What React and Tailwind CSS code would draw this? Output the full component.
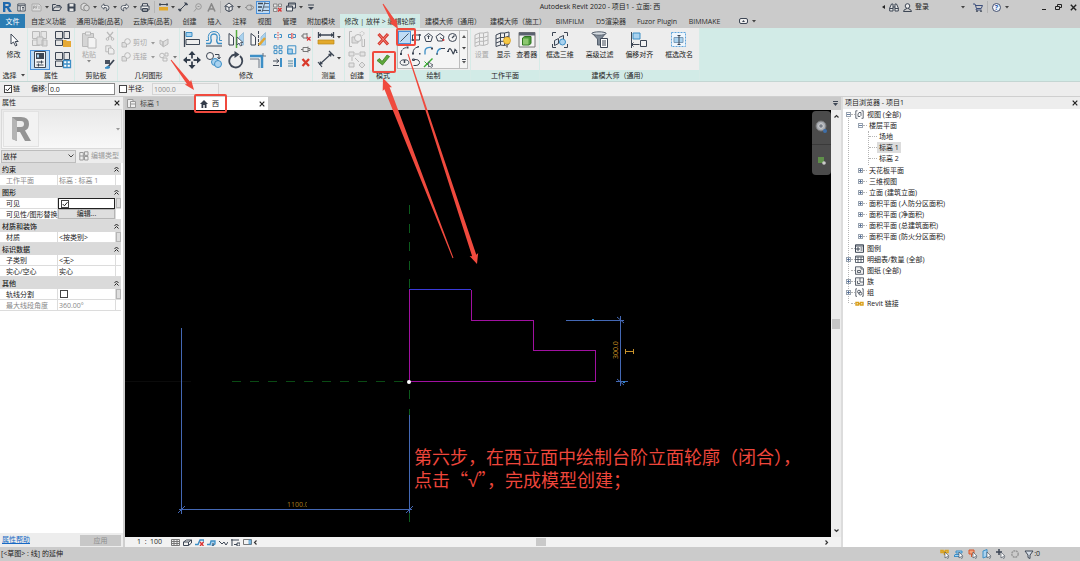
import React from "react";

const DARK = "#3d4654";
const BLUE = "#3d8fc6";
const LIGHT = "#a9d2ef";
const OFF = "#b9b9b9";

function Svg({ w = 16, h, box, children, className = "" }) {
  const height = h || w;
  return (
    <svg width={w} height={height} viewBox={box || `0 0 ${w} ${height}`} fill="none" stroke={DARK} strokeWidth="1" className={`block shrink-0 ${className}`} aria-hidden="true">
      {children}
    </svg>
  );
}

const Caret = ({ color = "#444" }) => (
  <Svg w={4} h={3}><path d="M0 0h4l-2 2.5z" fill={color} stroke="none" /></Svg>
);

const CloseX = ({ w = 6 }) => (
  <Svg w={w} box="0 0 6 6"><path d="M.7.7l4.6 4.6M5.3.7L.7 5.3" stroke="#222" strokeWidth="1.2" /></Svg>
);

/* Quick access toolbar */
const quickItems = [
  { label: "Revit", icon: <Svg w={10} box="0 0 10 10"><path d="M1 0h5q3 0 3 3 0 2-2 2.6L10 10H7L4.6 6H3.4v4H1z" fill="#1f68ad" stroke="none" /><path d="M3.4 2h2q1.4 0 1.4 1T5.4 4h-2z" fill="#cbcbcb" stroke="none" /></Svg> },
  { label: "主页", icon: <Svg w={9} box="0 0 9 9"><path d="M.8 1h7.4v7H.8zM1 2.7h7M3.2 3v5M5 4.500h2M5 6h2" fill="#eee" strokeWidth=".9" /></Svg> },
  { label: "族", wide: true, icon: <Svg w={11} h={9}><path d="M1 1h7l2 2v5H1z" fill="#dedede" stroke="#aaa" /><path d="M2.500 3v3M2.500 3h1.500v1.500H2.500M5 6V3h1.500M5 4.500h1M8 6V3" stroke="#999" strokeWidth=".7" /></Svg> },
  { caret: true },
  { label: "打开", icon: <Svg w={10} h={9}><path d="M.6 7.500V1.500h3l1 1h3.500v1.500M.6 7.500l2-3.500h7l-2 3.500z" fill="#d9d9d9" /></Svg> },
  { label: "保存", icon: <Svg w={9}><path d="M1 1h7v7H1z" fill="#3d4654" /><path d="M2.500 1h4v2.500h-4zM2.500 5.500h4V8h-4z" fill="#e8e8e8" stroke="none" /></Svg> },
  { label: "同步", icon: <Svg w={10}><path d="M1 3l3-2 3 1.500v4L4 8.500 1 7z" fill="#ddd" stroke="#8b8b8b" /><circle cx="6.500" cy="6" r="2.800" fill="#d5d5d5" stroke="#8b8b8b" /></Svg> },
  { caret: true },
  { label: "撤销", icon: <Svg w={10} h={9}><path d="M4 .8L1 3.500l3 2.700V4.500q3-.5 3 1.500 0 1-1 2 3-.5 3-3T6.500 2.500H4z" fill="#eee" strokeWidth=".8" /></Svg> },
  { caret: true },
  { label: "重做", icon: <Svg w={10} h={9}><path d="M6 .8l3 2.700-3 2.700V4.500q-3-.5-3 1.500 0 1 1 2-3-.5-3-3t2.500-2.500H6z" fill="#eee" strokeWidth=".8" /></Svg> },
  { caret: true },
  { label: "打印", icon: <Svg w={10} h={9}><path d="M2.500 3V.7h5V3M1 3h8v4H1zM2.500 5.500h5v3h-5z" fill="#eee" /></Svg> },
  { sep: true },
  { label: "测量", icon: <Svg w={9} h={8}><path d="M0 1.500h9M1 0v3M8 0v3" /><path d="M0 4h9v3.500H0z" fill="#e3a92c" stroke="none" /></Svg> },
  { caret: true },
  { label: "对齐尺寸标注", icon: <Svg w={10}><path d="M2 8L8 2M0 7l3 2M6.500.5L10 3" /><circle cx="2" cy="8" r="1" fill={DARK} /><circle cx="8" cy="2" r="1" fill={DARK} /></Svg> },
  { label: "按类别标记", icon: <Svg w={9}><circle cx="5.500" cy="3.500" r="2.800" stroke="#999" /><path d="M1 8.500l2.500-3M4.500 3.500h2" stroke="#999" /></Svg> },
  { label: "文字", icon: <Svg w={9}><path d="M1 8.500L4.500 1 8 8.500M2.500 6h4" stroke="#888" strokeWidth="1.600" /></Svg> },
  { sep: true },
  { label: "默认三维视图", icon: <Svg w={10}><path d="M.5 4.500L5 1l4.500 3.500M1.800 4v4l3.200 1.500L8.200 8V4M5 5.500v4M2 4l3 1.500L8 4" fill="#eee" /></Svg> },
  { caret: true },
  { label: "剖面", icon: <Svg w={9}><circle cx="4" cy="4.500" r="2.500" stroke="#8f8f8f" /><path d="M5.500 1.500L9 4.500l-3.500 3M0 4.500h1.500" stroke="#8f8f8f" /></Svg> },
  { label: "细线", on: true, icon: <Svg w={11} h={10}><path d="M0 1.500h5M0 5h4M0 8.500h3" strokeWidth="1.600" /><path d="M6.500 1.500H11M5.500 5H11M4.500 8.500H11M7 0L4 10" strokeWidth=".8" /></Svg> },
  { label: "关闭隐藏窗口", icon: <Svg w={9}><path d="M.5 1h3.500v3H.5zM.5 5.500H4V8.500H.5zM5.500 1h3v2.500h-3z" fill="#e8e8e8" stroke="#777" strokeWidth=".8" /><path d="M5 5l3.500 3.500M8.500 5L5 8.500" stroke="#d33" strokeWidth="1.400" /></Svg> },
  { label: "切换窗口", icon: <Svg w={10}><path d="M2.500 1h7v5h-7zM2.500 2h7" fill="#ddd" /><path d="M.5 4h6v5h-6zM.5 5h6" fill="#eee" /></Svg> },
  { caret: true },
  { label: "自定义", icon: <Svg w={6} h={6}><path d="M0 1h6" /><path d="M0 3h6L3 6z" fill={DARK} stroke="none" /></Svg> }
];

const tabs = [
  { text: "自定义功能", cls: "w-[45px]" },
  { text: "通用功能(品茗)", cls: "w-[57px]" },
  { text: "云族库(品茗)", cls: "w-[49px]" },
  { text: "创建", cls: "w-[25px]" },
  { text: "插入", cls: "w-[25px]" },
  { text: "注释", cls: "w-[25px]" },
  { text: "视图", cls: "w-[25px]" },
  { text: "管理", cls: "w-[25px]" },
  { text: "附加模块", cls: "w-[38px]" },
  { text: "修改 | 放样 > 编辑轮廓", cls: "w-[80px] bg-[#d2ebe7]" },
  { text: "建模大师（通用）", cls: "w-[66px]" },
  { text: "建模大师（施工）", cls: "w-[64px]" },
  { text: "BIMFILM", cls: "w-[40px]" },
  { text: "D5渲染器", cls: "w-[42px]" },
  { text: "Fuzor Plugin", cls: "w-[50px]" },
  { text: "BIMMAKE", cls: "w-[45px]" }
];

function TitleBar() {
  return (
    <header className="flex h-3.5 items-center">
      <div className="flex items-center">
        {quickItems.map((q, i) => {
          if (q.sep) return <span key={i} className="flex w-1 justify-center"><span className="h-3 w-px bg-[#b5b5b5]" /></span>;
          if (q.caret) return <span key={i} className="flex w-1.5 justify-center"><Caret /></span>;
          return (
            <button key={i} aria-label={q.label} className={`flex h-[13px] items-center justify-center ${q.wide ? "w-4" : "w-3.5"} ${q.on ? "border border-[#4a90d9] bg-[#bfdcf5]" : ""}`}>
              {q.icon}
            </button>
          );
        })}
      </div>
      <h1 className="flex-1 whitespace-nowrap text-center text-[7px] leading-3">Autodesk Revit 2020 - 项目1 - 立面: 西</h1>
      <div className="flex items-center pr-[3px]">
        <Svg w={3} h={4} className="mr-1"><path d="M3 0v4L0 2z" fill="#222" stroke="none" /></Svg>
        <button aria-label="搜索" className="mr-1">
          <Svg w={10} h={9}><path d="M2.500 1h1.500v7H.7V5zM7.500 1H6v7h3.300V5zM4 4h2M.7 5.500H4M6 5.500h3.300" fill="#e8e8e8" /></Svg>
        </button>
        <button className="flex items-center gap-[3px] text-[7px] leading-3">
          <Svg w={9} h={9}><circle cx="4.500" cy="3" r="2.300" fill="#eee" /><path d="M.5 8.500q0-2 3-2.700V5M8.500 8.500q0-2-3-2.700V5M.5 8.500h8" /></Svg>
          登录
        </button>
        <span className="ml-8 mr-2"><Caret /></span>
        <button aria-label="购物车"><Svg w={10} h={9}><path d="M0 1h2l1.500 4.500h4.700L9.500 2.500H2.500M3.500 5.500L3 7h5.500" stroke="#3d4f7c" /><circle cx="4" cy="8.200" r=".6" /><circle cx="8" cy="8.200" r=".6" /></Svg></button>
        <span className="mx-1 h-3 w-px bg-[#b5b5b5]" />
        <button aria-label="帮助" className="mr-1 flex size-[9px] items-center justify-center rounded-full border border-[#44506e] bg-[#eef3fa] text-[7px] font-bold leading-none text-[#2a5db0]">?</button>
        <span className="mr-8"><Caret /></span>
        <button aria-label="最小化" className="mr-2"><Svg w={6} h={6}><path d="M1 5.500h4" stroke="#222" /></Svg></button>
        <button aria-label="还原" className="mr-2"><Svg w={7} h={6}><path d="M2.500 2V.5h4v3H5M.5 2.500h4v3h-4z" stroke="#222" /></Svg></button>
        <button aria-label="关闭"><CloseX w={7} /></button>
      </div>
    </header>
  );
}

function TabBar() {
  return (
    <nav className="flex h-[14px] items-stretch text-[7px] leading-4 text-[#2c2c2c]">
      <button className="mr-px w-[25px] bg-[#2b7cb3] text-white">文件</button>
      {tabs.map((t) => (
        <button key={t.text} className={`${t.cls} whitespace-nowrap`}>{t.text}</button>
      ))}
      <button aria-label="最小化功能区" className="flex items-center gap-1 pl-3">
        <Svg w={9} h={6}><rect x=".5" y=".5" width="8" height="5" rx="1.500" fill="#eee" /><path d="M3 4h3L4.500 2z" fill={DARK} stroke="none" /></Svg>
        <Caret />
      </button>
    </nav>
  );
}

function Panel({ title, children, className, teal, bodyClass = "" }) {
  return (
    <section className={`flex shrink-0 flex-col border-r border-[#d6ebe7] ${className}`}>
      <div className={`flex-1 bg-[#ededed] ${bodyClass}`}>{children}</div>
      <h2 className={`flex h-[11px] items-center justify-center gap-1 whitespace-nowrap text-[7px] leading-[11px] ${teal ? "bg-[#d2ebe7]" : "bg-[#ededed]"}`}>{title}</h2>
    </section>
  );
}

function Tool({ label, children, className = "" }) {
  return <button aria-label={label} title={label} className={`flex items-center justify-center ${className}`}>{children}</button>;
}

function BigTool({ label, children, className = "", off }) {
  return (
    <button className={`flex flex-col items-center gap-px whitespace-nowrap text-[7px] leading-[10px] ${off ? "text-[#a8a8a8]" : ""} ${className}`}>
      {children}
      {label}
    </button>
  );
}

const Family = ({ c = DARK, children }) => (
  <Svg w={18}>
    <path d="M1.500 1.500h7v7h-7zM10 1.500h5.500v7H10zM1.500 10h7v5.500h-7z" fill="#e6e6e6" stroke={c} />
    {children}
  </Svg>
);

const Mirror = ({ draw }) => (
  <Svg w={17} h={18}>
    <path d="M1 3.500L5.500 7v8H1z" fill="#f5f5f5" />
    <path d="M15.500 2.500L11 7v8h4.500z" fill={LIGHT} stroke="#9cbfd8" />
    {draw ? <path d="M8.500 1v16" strokeDasharray="3 1" /> : <path d="M8.500 0v18" stroke="#55ad3c" strokeWidth="1.500" />}
    {draw ? <path d="M9 15l6-7" stroke="#e2a62f" strokeWidth="2.500" /> : <path d="M9 7v8l2-2 1.500 3 1.500-.7-1.400-2.800H15z" fill="#fff" strokeWidth=".8" />}
  </Svg>
);

const modifySmall = [
  { label: "拆分图元", d: <><path d="M3.500 2.500H1.500v3h2M6.500 2.500h2v3h-2" stroke={BLUE} /><path d="M5 0v8" stroke="#d44" strokeDasharray="1.500 1" /></> },
  { label: "用间隙拆分", d: <><path d="M4 2.500H1.500v3H4M6 2.500h2.500v3H6" stroke={BLUE} /><path d="M4.500 1v6M5.800 1v6" stroke="#d44" strokeWidth=".7" /></> },
  { label: "解锁", d: <><path d="M0 4h2M2 2v4h4M6 1v6M2 2h4" stroke="#777" /><path d="M6 5l3.500 3.500M9.500 5L6 8.500" stroke="#d33" strokeWidth="1.200" /></> },
  { label: "阵列", d: <path d="M1 .8h3v3H1zM6 .8h3v3H6zM1 5.600h3v3H1zM6 5.600h3v3H6z" stroke={BLUE} /> },
  { label: "缩放", d: <><path d="M.8.8h8v8h-8z" stroke={BLUE} /><path d="M.8 4h4.500v4.800H.8z" fill={LIGHT} stroke={BLUE} /></> },
  { label: "锁定", d: <path d="M0 4.500h2M2 2.500v4h5M7 1.500v6M2 2.500h5M7 3.500h2v2H7" stroke="#777" /> },
  { label: "修剪单个图元", d: <><path d="M8 0v9" stroke={BLUE} strokeWidth="2" /><path d="M0 3h5M3.500 1L6 3 3.500 5M0 7.500h6" /></> },
  { label: "修剪多个图元", d: <><path d="M8 0v9" stroke={BLUE} strokeWidth="2" /><path d="M1 3h5M1 5.500h5M1 8h5" stroke="#8ab" strokeWidth="1.600" /></> },
  { label: "删除", d: <path d="M1.500 1l6.500 7M8 1L1.500 8" stroke="#d93a2b" strokeWidth="2.300" /> }
];

const drawTools = [
  { label: "线", on: true, d: <path d="M1.500 9.500L9.500 1.500" stroke="#456" /> },
  { label: "矩形", d: <><path d="M1.500 3h7v5h-7z" /><path d="M.7 7h2v2h-2zM7.700 2h2v2h-2z" fill={DARK} stroke="none" /></> },
  { label: "内接多边形", d: <><path d="M5.500 1.500l4 3-1.500 5H3l-1.500-5zM5.500 7V4" /><path d="M4 5l1.500-2L7 5z" fill={DARK} stroke="none" /></> },
  { label: "外接多边形", d: <><path d="M5 1.500l4 3-1.500 4.500H2.800L1 4.500z" /><path d="M5 5.500l3 2" /><circle cx="8.500" cy="8" r="1" fill="#d33" stroke="none" /></> },
  { label: "圆形", d: <><circle cx="5.500" cy="5.500" r="4" /><path d="M5 6l2.500-2.500" strokeWidth="1.300" /></> },
  { label: "起点-终点-半径弧", d: <><path d="M2 9q0-6 6-6.500" strokeDasharray="4 1" /><path d="M1 8h2v2H1zM7.500 1.500h2v2h-2z" fill={DARK} stroke="none" /></> },
  { label: "圆心-端点弧", d: <><path d="M2 8q0-5 5-6" /><path d="M1 7.500h2v2H1zM8 8h1.500v1.500H8zM6.500 1H8v1.500H6.500z" fill={DARK} stroke="none" /></> },
  { label: "相切-端点弧", d: <><path d="M2 9.500V6q0-4 6.500-3.500" stroke={BLUE} strokeWidth="1.300" /><path d="M8 2.500h2v2H8z" fill={DARK} stroke="none" /></> },
  { label: "圆角弧", d: <><path d="M2 9.500q0-5 4-6" stroke={BLUE} strokeWidth="1.300" /><path d="M6 3.500h4M2 10V8" /></> },
  { label: "样条曲线", d: <path d="M1 6.500q1.500-4.500 3-2t2 4 2-4l2 2M0 6.500h2M9 7.500h1.500" strokeWidth="1.200" /> },
  { label: "椭圆", d: <><ellipse cx="5.500" cy="5.500" rx="4.300" ry="2.700" /><path d="M5.500 3v3" strokeWidth="1.500" /></> },
  { label: "半椭圆", d: <path d="M2.500 2.500q6-.5 6 3t-6 3M1.500 2h2v1.500h-2z" /> },
  { label: "拾取线", d: <><path d="M1 10l8.500-8.500" stroke="#3bab35" strokeWidth="1.500" /><path d="M1.500 4.500l5 5" stroke="#3bab35" /><path d="M5.500 5v5l1.500-1 1 1.500L9.500 9.500 8.500 8H10z" fill="#eee" strokeWidth=".7" /></> }
];

const Grid3 = ({ c, children }) => (
  <Svg w={18}>
    <path d="M2 4l4.500-2 4 0 4.500-1v12l-4.500 1.500-4-.5L2 15.500zM6.500 2v12M10.500 2v12.500M2 8l4.500-1.500h4L15 5M2 12l4.500-1.700h4L15 9" fill="#eee" stroke={c} />
    {children}
  </Svg>
);

function Ribbon() {
  return (
    <div className="flex h-[54px] overflow-hidden border-b border-[#c4d6d3] bg-[#d2ebe7]">
      <Panel title={<>选择 <Caret /></>} className="w-7" bodyClass="flex items-start justify-center pt-1">
        <BigTool label="修改">
          <Svg w={10} h={17}><path d="M2 2v10l2.500-2 2 4 1.500-.8-1.800-3.700h3z" fill="#fff" /></Svg>
        </BigTool>
      </Panel>

      <Panel title="属性" className="w-[47px]" bodyClass="grid grid-cols-2 grid-rows-2 place-items-center pt-px">
        <Tool label="族类别"><Family c={OFF}><path d="M6 7h6v8H6zM11 10h5v6h-5z" fill="#ddd" stroke={OFF} /></Family></Tool>
        <Tool label="族类型"><Family><path d="M9 10h3l1 1h4v6H9z" fill="#e5a935" stroke="none" /></Family></Tool>
        <Tool label="属性" className="size-5 border border-[#4a90d9] bg-[#bfdcf5]">
          <Svg w={14} h={17}><path d="M1.500.5h11v16h-11z" fill="#f3f3f3" /><path d="M3 2h8v6H3z" fill={DARK} stroke="none" /><path d="M4 3.500h2v3H4z" fill={LIGHT} stroke="none" /><path d="M3.500 11h7M3.500 14h7M8.500 9.500v3M5.500 12.500v3" /></Svg>
        </Tool>
        <Tool label="类型属性"><Family><path d="M9.500 9.500h7v7h-7zM9.500 13h7M13 9.500v7" fill="#fff" stroke={BLUE} strokeWidth="1.300" /></Family></Tool>
      </Panel>

      <Panel title="剪贴板" className="w-[43px]" bodyClass="flex items-start justify-between pl-1.5 pr-0.5 pt-[3px]">
        <div className="flex flex-col items-center">
          <BigTool label="粘贴" off>
            <Svg w={16} h={18}><path d="M1.500 2.500h11v13h-11z" fill="#d5d5d5" stroke={OFF} /><path d="M4.500 1h5v3h-5z" fill="#eee" stroke={OFF} /><path d="M7 6.500h6l2 2v8.500H7z" fill="#f3f3f3" stroke={OFF} /></Svg>
          </BigTool>
          <Caret color="#888" />
        </div>
        <div className="flex flex-col gap-1">
          <Tool label="剪切"><Svg w={10}><path d="M2 1l5 6M8 1L3 7" stroke={OFF} strokeWidth="1.200" /><circle cx="2.500" cy="8" r="1.300" stroke={OFF} /><circle cx="7.500" cy="8" r="1.300" stroke={OFF} /></Svg></Tool>
          <Tool label="复制"><Svg w={10}><path d="M.8.8h5v6h-5z" stroke={OFF} /><path d="M3.500 3h3.500l2 2v4H3.500z" fill="#eee" stroke={OFF} /></Svg></Tool>
          <Tool label="匹配类型"><Svg w={11} h={10}><path d="M1 1h5v4H1z" fill="#4a5260" stroke="none" /><path d="M4 8l6-7" strokeWidth="1.800" /><path d="M1 9l3-2 2 1.500Q4 10 1 9z" fill={BLUE} stroke={BLUE} /></Svg></Tool>
        </div>
      </Panel>

      <Panel title="几何图形" className="w-[62px]" bodyClass="flex flex-col gap-1 pl-[3px] pt-2.5 text-[#a8a8a8]">
        {["剪切", "连接"].map((t, i) => (
          <div key={t} className="flex items-center gap-1 text-[7px] leading-[10px]">
            <button className="flex items-center gap-0.5 whitespace-nowrap">
              <Svg w={10}><path d="M1 4.500h4.500V9H1z" fill="#e0e0e0" stroke={OFF} /><circle cx="6.500" cy="3.500" r="2.800" fill="#eee" stroke={OFF} /></Svg>
              {t}
            </button>
            <Caret color="#999" />
            <Tool label={i ? "拆除" : "连接端切割"}>
              {i ? (
                <Svg w={10}><circle cx="3" cy="3.500" r="2.300" stroke={OFF} /><path d="M6 1h3v3H6zM4 6h4v3H4z" stroke={OFF} /></Svg>
              ) : (
                <Svg w={10}><path d="M1 2l3 2v4L1 6zM4 4l5-3v5L4 9z" fill="#e0e0e0" stroke={OFF} /></Svg>
              )}
            </Tool>
            {i === 1 && <Caret color="#777" />}
          </div>
        ))}
      </Panel>

      <Panel title="修改" className="w-[133px]" bodyClass="flex gap-1.5 pl-[3px]">
        <div className="grid grid-cols-4 place-items-center gap-x-1">
          <Tool label="对齐"><Svg w={18}><path d="M1.500 1v16" strokeWidth="1.300" /><path d="M3 2.500h6v4H3z" fill={LIGHT} stroke={BLUE} /><path d="M3 9.500h13.500v5H3z" fill="#eee" /></Svg></Tool>
          <Tool label="偏移"><Svg w={18}><path d="M1 13.500h4q2-2 1-4.500-1-5 3-5t3 5q-1 2.500 1 4.500h4" stroke={BLUE} strokeWidth="1.300" /><path d="M1 10.500h2.500Q2 1.500 9 1.500t5.500 9H17" stroke={BLUE} /><path d="M1 16h16" /></Svg></Tool>
          <Tool label="镜像 - 拾取轴"><Mirror /></Tool>
          <Tool label="镜像 - 绘制轴"><Mirror draw /></Tool>
          <Tool label="移动"><Svg w={18}><path d="M9 3v12M3 9h12" strokeWidth="1.800" /><path d="M9 0l3.500 4h-7zM9 18l3.500-4h-7zM0 9l4-3.500v7zM18 9l-4-3.500v7z" fill="#2e3948" stroke="none" /><path d="M7.500 7.500h3v3h-3z" fill="#eee" stroke="none" /></Svg></Tool>
          <Tool label="复制"><Svg w={18}><circle cx="5" cy="5" r="3.500" fill="#f3f3f3" /><circle cx="10" cy="11" r="3.500" fill={LIGHT} stroke={BLUE} /><circle cx="13" cy="13" r="3.500" fill={LIGHT} stroke={BLUE} /><path d="M10 3.500h4v4M12.500 6l1.500 2 1.500-2" /></Svg></Tool>
          <Tool label="旋转"><Svg w={18}><path d="M8 3.500a6.500 6.500 0 1 0 5 1.500" strokeWidth="1.800" /><path d="M7.500 0v7l5-3.500z" fill={DARK} stroke="none" /></Svg></Tool>
          <Tool label="修剪/延伸为角"><Svg w={18}><path d="M1 5h12v12" stroke={BLUE} strokeWidth="2.500" /><path d="M14 2v3h3M10 8v9M1 8h9" stroke="#6b7784" /></Svg></Tool>
        </div>
        <div className="grid grid-cols-3 place-items-center gap-x-1 pt-0.5">
          {modifySmall.map((m) => (
            <Tool key={m.label} label={m.label}><Svg w={10}>{m.d}</Svg></Tool>
          ))}
        </div>
      </Panel>

      <Panel title="测量" className="w-8" bodyClass="flex flex-col items-center justify-around">
        <Tool label="测量" className="gap-0.5">
          <Svg w={18} h={14}><path d="M1 4h16M1.500 1v6M16.500 1v6" strokeWidth="1.300" /><path d="M1 4l3-2v4zM17 4l-3-2v4z" fill={DARK} stroke="none" /><path d="M1 9h16v4H1z" fill="#e3a92c" stroke="#b98718" strokeWidth=".7" /></Svg>
          <Caret />
        </Tool>
        <Tool label="尺寸标注" className="gap-0.5">
          <Svg w={18}><path d="M3 14L14 4M1 12l4 5M12 1l5 5" strokeWidth="1.200" /><path d="M2 15l1-4 3 3zM15 3l-4 1 3 3z" fill={DARK} stroke="none" /></Svg>
          <Caret />
        </Tool>
      </Panel>

      <Panel title="创建" className="w-[25px]" bodyClass="flex flex-col items-center justify-around">
        <Tool label="创建组"><Svg w={18}><path d="M4 1.500H1.500v15H4M14 9v7.500h2.500V9" stroke={OFF} /><path d="M4 7h6v6H4z" fill="#ddd" stroke={OFF} /><circle cx="10" cy="8" r="3.500" fill="#eee" stroke={OFF} /><circle cx="14" cy="3.500" r="2" stroke={OFF} strokeDasharray="1 1" /></Svg></Tool>
        <Tool label="创建类似实例"><Svg w={18}><path d="M1 1h5v4H1zM12 1h5v4h-5zM1 12h5v4H1zM7 3h4M4 6v4M7 7l4 4M14 11l3 3-3 3-3-3z" fill="#e3e3e3" stroke={OFF} /></Svg></Tool>
      </Panel>

      <Panel title="模式" teal className="w-[27px]" bodyClass="flex flex-col items-center justify-around">
        <Tool label="取消编辑模式"><Svg w={14}><path d="M2.500 2l9.500 10.500M12 2L2.500 12.500" stroke="#d8382e" strokeWidth="3" /><path d="M3 2.500l8.500 9.500M11.500 2.500L3 12" stroke="#f08a80" strokeWidth="1" /></Svg></Tool>
        <Tool label="完成编辑模式"><Svg w={14}><path d="M1 7.500l2.500-2L6 8.500 11 2l2.500 1.500L6.500 12z" fill="#5fa83c" stroke="#3f7d22" strokeWidth=".8" /></Svg></Tool>
      </Panel>

      <Panel title="绘制" teal className="w-[74px]" bodyClass="pr-0.5 pt-0.5">
        <div className="flex h-[39px] border border-[#bcbcbc] bg-[#f4f4f4]">
          <div className="grid flex-1 grid-cols-5 place-items-center">
            {drawTools.map((d) => (
              <Tool key={d.label} label={d.label} className={d.on ? "border border-[#4a90d9] bg-[#bfdcf5]" : ""}>
                <Svg w={11}>{d.d}</Svg>
              </Tool>
            ))}
          </div>
          <div className="flex w-2 flex-col items-center justify-around border-l border-[#bcbcbc]">
            <Svg w={4} h={3}><path d="M0 3h4L2 0z" fill="#555" stroke="none" /></Svg>
            <Caret />
            <Svg w={4} h={5}><path d="M0 .5h4" /><path d="M0 2h4L2 4.500z" fill="#555" stroke="none" /></Svg>
          </div>
        </div>
      </Panel>

      <Panel title="工作平面" teal className="w-[69px]" bodyClass="flex justify-around pt-[3px]">
        <BigTool label="设置" off><Grid3 c={OFF} /></BigTool>
        <BigTool label="显示"><Grid3 c={DARK}><circle cx="13" cy="9.500" r="3.500" fill="#f6c944" stroke="#d49a1d" strokeWidth=".7" /><path d="M12 13.500h2v3h-2z" fill="#888" stroke="none" /></Grid3></BigTool>
        <BigTool label="查看器"><Svg w={18}><path d="M1 1.500h16v14.500H1z" fill="#f3f3f3" stroke="#777" /><path d="M1 1.500h16v3H1z" fill="#5a6270" stroke="none" /><path d="M4.500 7l2-1.500h6.500v7l-2 1.500H4.500z" fill="#4d9a3a" stroke="#2f7420" /><path d="M5 7.500h5.500v6H5z" fill="#8cc86f" stroke="none" /></Svg></BigTool>
      </Panel>

      <Panel title="建模大师（通用）" teal className="w-40" bodyClass="grid grid-cols-4 pt-[3px]">
        <BigTool label="框选三维"><Svg w={18}><path d="M1.500 5V1.500H5M13 1.500h3.500V5M16.500 13v3.500H13M5 16.500H1.500V13" /><path d="M3.500 9.500l4-2v5l-4 2zM8 6.500l4.500-2v4" fill="#dfe6ee" /><circle cx="11.500" cy="11" r="3" fill={LIGHT} stroke={BLUE} /></Svg></BigTool>
        <BigTool label="高级过滤"><Svg w={18}><path d="M1 2h14L10 8v6H6.500V8z" fill="#7f8a97" stroke="#56606d" /><ellipse cx="8" cy="2.500" rx="7" ry="1.700" fill="#d5dbe1" stroke="#56606d" /><path d="M9.500 7.500h7v9h-7zM11 10h4M11 12h4M11 14h4" fill="#fff" /></Svg></BigTool>
        <BigTool label="偏移对齐"><Svg w={18}><path d="M1.500 1v16M1.500 13.500h8M3.500 11.500l-2 2 2 2" /><path d="M3 2h7v6H3z" fill={LIGHT} stroke={BLUE} /><path d="M10.500 9.500h6v6h-6z" fill="#f3f3f3" /></Svg></BigTool>
        <BigTool label="框选改名"><Svg w={18}><rect x="1.500" y="1.500" width="14" height="14" fill="#eef6fd" stroke="#5fa5dc" strokeDasharray="2 1" /><path d="M4 6.500h9v5H4z" fill={LIGHT} stroke="#7d9cb8" /><path d="M9 4.500v9M7.500 4.500h3M7.500 13.500h3" /></Svg></BigTool>
      </Panel>
    </div>
  );
}

function Tick({ id, checked, label }) {
  return (
    <span className="relative inline-block size-2 shrink-0">
      <input id={id} type="checkbox" defaultChecked={checked} aria-label={label} className="peer absolute inset-0 size-2 appearance-none border border-[#444] bg-white" />
      <svg viewBox="0 0 8 8" className="pointer-events-none absolute inset-0 hidden size-2 peer-checked:block" fill="none" stroke="#222">
        <path d="M1.700 4l1.700 1.800L6.500 2.200" />
      </svg>
    </span>
  );
}

function OptionsBar() {
  return (
    <div className="flex h-[15px] items-center border-b border-[#cfcfcf] bg-[#ededed] pl-1 text-[7px]">
      <Tick id="chain" checked />
      <label htmlFor="chain" className="ml-px w-[18px]">链</label>
      <label htmlFor="offset" className="w-[17px]">偏移:</label>
      <input id="offset" type="text" defaultValue="0.0" className="h-3 w-[67px] border border-[#8a8a8a] bg-white px-px text-[7px] leading-[10px]" />
      <span className="ml-1 flex"><Tick id="radiusOn" /></span>
      <label htmlFor="radiusOn" className="ml-px w-4 whitespace-nowrap">半径:</label>
      <input type="text" aria-label="半径值" defaultValue="1000.0" disabled className="ml-2 h-3 w-[67px] border border-[#d5d5d5] bg-[#efefef] px-px text-[7px] leading-[10px] text-[#8a8a8a]" />
    </div>
  );
}

/* Properties palette */
const props = [
  { group: "约束", rows: [{ k: "工作平面", v: "标高 : 标高 1", off: true }] },
  { group: "图形", rows: [{ k: "可见", check: true, on: true, more: true }, { k: "可见性/图形替换", edit: "编辑..." }] },
  { group: "材质和装饰", rows: [{ k: "材质", v: "<按类别>", more: true }] },
  { group: "标识数据", rows: [{ k: "子类别", v: "<无>" }, { k: "实心/空心", v: "实心" }] },
  { group: "其他", rows: [{ k: "轨线分割", check: true, more: true }, { k: "最大线段角度", v: "360.00°", off: true }] }
];

function PropertyRow({ row }) {
  return (
    <tr className={row.off ? "text-[#888]" : ""}>
      <th scope="row" className="h-[11px] whitespace-nowrap border-b border-r border-[#dcdcdc] p-0 pl-1.5 text-left font-normal">{row.k}</th>
      <td className={`h-[11px] p-0 ${row.on ? "border border-[#222]" : "border-b border-[#dcdcdc]"}`}>
        {row.check && <span className="flex pl-0.5"><Tick id={row.k} checked={row.on} label={row.k} /></span>}
        {row.edit && <button className="block h-2.5 w-full border border-[#b5b5b5] bg-[#dedede] text-center leading-2">{row.edit}</button>}
        {row.v && <span className="pl-px">{row.v}</span>}
      </td>
      <td className="h-[11px] border-b border-l border-[#dcdcdc] p-0">
        {row.more && <button aria-label={`关联 ${row.k}`} className="block h-2.5 w-full border border-[#b5b5b5] bg-[#dedede]" />}
      </td>
    </tr>
  );
}

function Properties() {
  return (
    <aside className="flex w-[123px] shrink-0 flex-col bg-[#ededed]">
      <div className="flex h-3 items-center justify-between pl-0.5 pr-[3px] text-[7px] leading-3">
        <h2>属性</h2>
        <button aria-label="关闭属性"><CloseX /></button>
      </div>
      <div className="mx-px flex h-10 items-center justify-between border border-[#dadada] bg-linear-to-b from-[#e9e9e9] to-[#f8f8f8] pl-px pr-px">
        <div className="flex size-9 items-center justify-center border border-[#e2e2e2] bg-[#f2f2f2]">
          <Svg w={22} h={26}>
            <path d="M2 1h9q8 0 8 7 0 5-4 6.500L21 25h-6l-5-9H7v9l-5-2z" fill="#949494" stroke="none" />
            <path d="M7 5h4q3 0 3 3t-3 3H7z" fill="#ededed" stroke="none" />
            <path d="M2 1l5 4v20l-5-2z" fill="#b4b4b4" stroke="none" />
          </Svg>
        </div>
        <Caret color="#999" />
      </div>
      <div className="flex h-[14px] items-center gap-[3px] pl-px text-[7px]">
        <div className="relative flex w-[75px]">
          <select aria-label="类型" className="h-[13px] w-full appearance-none border border-[#bdbdbd] bg-[#e2e2e2] pl-px leading-[11px]">
            <option>放样</option>
          </select>
          <svg viewBox="0 0 6 4" className="pointer-events-none absolute right-0.5 top-1 h-1 w-1.5" fill="none" stroke="#444"><path d="M.5.5L3 3 5.500.5" /></svg>
        </div>
        <button className="flex items-center gap-0.5 whitespace-nowrap text-[#999]">
          <Svg w={10}><path d="M.8 1.500h3.500V9H.8zM5.500.8h3.500v3.500H5.500zM5.500 5.500h3.500V9H5.500zM.8 5h8" stroke="#999" /></Svg>
          编辑类型
        </button>
      </div>
      <div className="flex-1 bg-white">
        <table className="w-[121px] table-fixed border-separate border-spacing-0 bg-white text-[7px] leading-[9px]">
          <colgroup><col className="w-[58px]" /><col /><col className="w-1.5" /></colgroup>
          {props.map((g) => (
            <tbody key={g.group}>
              <tr>
                <th colSpan={3} scope="colgroup" className="h-3 bg-[#dadada] px-0.5 py-0 text-left font-medium">
                  <span className="flex items-center justify-between">
                    {g.group}
                    <Svg w={5} h={6}><path d="M.5 3l2-2 2 2M.5 5.500l2-2 2 2" stroke="#222" /></Svg>
                  </span>
                </th>
              </tr>
              {g.rows.map((r) => <PropertyRow key={r.k} row={r} />)}
            </tbody>
          ))}
        </table>
      </div>
      <div className="flex h-[14px] items-center justify-between pl-0.5 pr-0.5 text-[7px]">
        <a href="#help" className="text-[#1769c4] underline">属性帮助</a>
        <button disabled className="h-[11px] w-[41px] bg-[#c8c8c8] leading-[11px] text-[#8d8d8d]">应用</button>
      </div>
    </aside>
  );
}

/* Elevation sketch of the stair profile */
function Sketch() {
  return (
    <svg viewBox="125 110 706 427" width="706" height="427" className="block" fill="none" shapeRendering="crispEdges">
      <path d="M409.500 205v284M409.500 513v10" stroke="#0c5a1c" strokeDasharray="9 9.500" />
      <path d="M232 381.500h176" stroke="#0a4a14" strokeDasharray="9 9" />
      <path d="M125 381.500h66" stroke="#0b0b0b" />
      <path d="M409.500 289.500v92h186v-31h-62v-30h-62v-31" stroke="#a010a0" />
      <path d="M409 289.500h62" stroke="#3a3ad8" />
      <g stroke="#4468b4">
        <path d="M181.500 328v186M409.500 415v98M179 509.500h233" />
        <path d="M566 320.500h58M620.500 316v70M616 381.500h12" />
        <path d="M178 513l7-7M406 513l7-7M617 317l7 6M617 379l7 6" shapeRendering="auto" />
      </g>
      <path d="M592 319h2v2h-2zM623 381h2v2h-2z" fill="#2f7fc4" />
      <circle cx="409" cy="382" r="2" fill="#fff" shapeRendering="auto" />
      <svg x="286" y="498" width="21" height="11" viewBox="0 0 21 11">
        <text x="1" y="9" fontSize="7" fill="#a87c1c">1100.0</text>
      </svg>
      <text transform="translate(618 359) rotate(-90)" fontSize="7" fill="#c08a20">300.0</text>
      <path d="M625.500 349v5M633.500 349v5M626 351.500h7" stroke="#c8922a" />
    </svg>
  );
}

const viewControls = [
  { label: "视觉样式", d: <path d="M.5.500h8v6h-8zM1 2.500h7M1 4.500h7M3 .5v6M6 .5v6" stroke="#777" /> },
  { label: "日光路径", d: <path d="M.5 3l3-2h5v3l-3 2.500h-5zM.5 3h5l3-2M5.500 3v3.500" /> },
  { label: "阴影", d: <><path d="M0 5.500h3L5 1h4v3" stroke={BLUE} strokeWidth="1.500" /><path d="M5 3l3.500 4M8.500 3L5 7" stroke="#d33" strokeWidth="1.300" /></> },
  { label: "裁剪视图", d: <><path d="M0 5.500h3L4 2h4v3L5 7" fill={LIGHT} stroke={BLUE} strokeWidth="1.300" /><path d="M6 4v3" /></> },
  { label: "临时隐藏", d: <path d="M0 2l3 3 2-2 2 3 2-3" /> },
  { label: "显示约束", d: <path d="M0 1h8M1 0v7M3 5.500h3M6 4h3v3H6z" /> },
  { label: "预览", d: <><path d="M.5.500h8v5h-8z" fill="#f3f3f3" stroke="#777" /><path d="M6 1h2v4H6z" fill={LIGHT} stroke={BLUE} strokeWidth=".7" /></> }
];

function Chevron({ d }) {
  return <Svg w={5} h={5}><path d={d} stroke="#333" strokeWidth="1.200" /></Svg>;
}

function ViewArea() {
  return (
    <main className="flex min-w-0 flex-1 flex-col border-l-2 border-[#cfcfcf]">
      <div className="flex h-[13px] items-center bg-[#c9c9c9] text-[7px] leading-3">
        <button className="flex h-full w-[69px] items-center gap-1 pl-0.5 text-[#444]">
          <Svg w={9}><path d="M.5.500h5.500v2H8.500v6h-8zM3.500 2.500H6M3.500 2.500v6M3.500 5h5" fill="#eee" stroke="#999" /></Svg>
          标高 1
        </button>
        <div className="flex h-full w-[74px] items-center justify-between bg-white pl-1.5 pr-[3px]">
          <button className="flex items-center gap-1">
            <Svg w={8} h={8}><path d="M4 0l4 4H0zM1.500 4h5v4h-5z" fill="#333c4a" stroke="none" /><path d="M3.300 5h1.400v3H3.300z" fill="#fff" stroke="none" /></Svg>
            西
          </button>
          <button aria-label="关闭视图"><CloseX /></button>
        </div>
        <button aria-label="视图列表" className="ml-auto mr-[3px]">
          <Svg w={5} h={5}><path d="M0 .5h5" /><path d="M0 2h5L2.500 5z" fill={DARK} stroke="none" /></Svg>
        </button>
      </div>
      <div className="flex min-h-0 flex-1">
        <div className="relative min-w-0 flex-1 overflow-hidden bg-black">
          <Sketch />
          <p className="absolute left-[289px] top-[335px] whitespace-nowrap font-['Noto_Sans_CJK_SC',sans-serif] text-[18px] leading-[23px] text-[#ee463b]">
            第六步，在西立面中绘制台阶立面轮廓（闭合），<br />点击“<span className="font-['Open_Sans',sans-serif]">√</span>”，完成模型创建；
          </p>
          <div className="absolute right-0 top-px flex h-16 w-[19px] flex-col items-center justify-around rounded-sm bg-[#4b4b4b] py-1">
            <button aria-label="控制盘"><Svg w={13} h={14}><circle cx="6" cy="6" r="5" fill="#a9adb3" stroke="#777" /><circle cx="6" cy="6" r="2.300" fill="#777d86" stroke="#d5d5d5" /><circle cx="10" cy="11" r="2" fill="#3e6ea8" stroke="none" /></Svg></button>
            <span className="h-px w-full bg-[#3a3a3a]" />
            <button aria-label="缩放"><Svg w={10}><path d="M1 1h6v6H1z" fill="#5f8f4a" stroke="none" /><circle cx="7" cy="7" r="1.800" fill="#ccc" stroke="none" /></Svg></button>
          </div>
        </div>
        <div className="flex w-[10px] flex-col items-center justify-between bg-[#ededed] py-1">
          <Chevron d="M.5 3.500l2-2 2 2" />
          <span className="h-[10px] w-2 bg-[#c6c6c6]" />
          <Chevron d="M.5 1.500l2 2 2-2" />
        </div>
      </div>
      <div className="flex h-[10px] items-center bg-[#f2f2f2] text-[7px] leading-[10px]">
        <span className="w-11 whitespace-pre pl-3">1  :  100</span>
        <div className="flex w-[84px] items-center justify-around">
          {viewControls.map((v) => (
            <button key={v.label} aria-label={v.label}><Svg w={9} h={7}>{v.d}</Svg></button>
          ))}
        </div>
        <div className="flex flex-1 items-center justify-between pr-3">
          <Chevron d="M3.500.5l-2 2 2 2" />
          <span className="h-2 w-2.5 bg-[#c9c9c9]" />
          <Chevron d="M1.500.5l2 2-2 2" />
        </div>
      </div>
    </main>
  );
}

/* Project browser */
const tree = [
  {
    name: "视图 (全部)", open: true, icon: <path d="M2.500.8H.8v7.500h1.700M6.500.8h1.700v7.500H6.500M3 4l1-1.500h2v3L5 6.500H3z" strokeWidth=".8" />,
    children: [
      { name: "楼层平面", open: true, children: [{ name: "场地" }, { name: "标高 1", selected: true }, { name: "标高 2" }] },
      { name: "天花板平面", open: false },
      { name: "三维视图", open: false },
      { name: "立面 (建筑立面)", open: false },
      { name: "面积平面 (人防分区面积)", open: false },
      { name: "面积平面 (净面积)", open: false },
      { name: "面积平面 (总建筑面积)", open: false },
      { name: "面积平面 (防火分区面积)", open: false }
    ]
  },
  { name: "图例", icon: <path d="M.5.800h8v7.500h-8zM.5 2h8M2 4h2v2H2zM5.500 4h2M5.500 6h2" /> },
  { name: "明细表/数量 (全部)", open: false, icon: <path d="M.5 1h8v6.500h-8zM.5 2h8M.5 4.500h8M3 2v5.500M6 2v5.500" strokeWidth=".8" /> },
  { name: "图纸 (全部)", icon: <path d="M.5.800h6l2 2v5.500h-8zM2.500 4.500h3v2h-3zM6 1v2h2" fill="#eee" strokeWidth=".8" /> },
  { name: "族", open: false, icon: <path d="M.5.800h8v7.500h-8zM5 1v4h3.500M2.500 4v2.500H5" fill="#eee" strokeWidth=".8" /> },
  { name: "组", open: false, icon: <g strokeWidth=".8"><path d="M2 .8H.8v7.500H2M7 .8h1.200v7.500H7" /><circle cx="4" cy="3.700" r="1.500" /><circle cx="5.300" cy="5.500" r="1.500" /></g> },
  { name: "Revit 链接", icon: <path d="M1 3.500h2.500v2.500H1zM5.500 3.500H8v2.500H5.500zM3.500 4.700h2" stroke="#d9a01e" strokeWidth="1.400" /> }
];

function TreeNode({ node, depth }) {
  return (
    <li>
      <div className="flex h-[11px] items-center">
        {depth < 2 ? (
          <>
            {node.open === undefined ? (
              <span className="w-[5px]" />
            ) : (
              <button aria-label={node.name} aria-expanded={node.open} className="relative z-10">
                <Svg w={5}><rect x=".5" y=".5" width="4" height="4" fill="#fff" stroke="#9aa4b0" /><path d={node.open ? "M1 2.500h3" : "M1 2.500h3M2.500 1v3"} stroke="#44608a" strokeWidth=".8" /></Svg>
              </button>
            )}
            <span className="w-1 border-t border-dotted border-[#b5b5b5]" />
          </>
        ) : (
          <span className="w-2 border-t border-dotted border-[#b5b5b5]" />
        )}
        {node.icon && <Svg w={9} className="mr-px">{node.icon}</Svg>}
        <span className={`whitespace-nowrap px-0.5 leading-[11px] ${node.selected ? "bg-[#dcdcdc]" : ""}`}>{node.name}</span>
      </div>
      {node.children && (
        <ul className={`pb-px ${depth === 0 ? "ml-3" : "ml-2.5 border-l border-dotted border-[#b5b5b5]"}`}>
          {node.children.map((c) => <TreeNode key={c.name} node={c} depth={depth + 1} />)}
        </ul>
      )}
    </li>
  );
}

function Browser() {
  return (
    <aside className="flex w-[239px] shrink-0 flex-col border-l-2 border-[#dcdcdc] bg-white text-[7px]">
      <div className="flex h-3 items-center justify-between bg-[#ededed] pl-0.5 pr-0.5 leading-3">
        <h2>项目浏览器 - 项目1</h2>
        <button aria-label="关闭项目浏览器"><CloseX /></button>
      </div>
      <ul className="relative pl-[3px] before:absolute before:bottom-1.5 before:left-[5px] before:top-1.5 before:border-l before:border-dotted before:border-[#b5b5b5] before:content-['']">
        {tree.map((n) => <TreeNode key={n.name} node={n} depth={0} />)}
      </ul>
    </aside>
  );
}

const Cursor = () => <path d="M5 3v6l1.500-1.200 1 1.700 1-.5-1-1.800H9z" fill="#fff" strokeWidth=".6" />;

const statusTools = [
  { label: "选择链接", d: <><path d="M1 1.500h2v2H1zM5.500 1.500H8v2H5.500zM3 2.500h3M4.500 3v3" stroke="#dba31f" strokeWidth="1.500" /><Cursor /></> },
  { label: "选择基线图元", d: <><path d="M2 2h6v2H2zM1 5.500h6v2H0z" fill={LIGHT} stroke={BLUE} /><Cursor /></> },
  { label: "选择锁定图元", d: <><path d="M1 1h5v4H1zM3.500 5v3" fill="#f3a27b" stroke="#d5552b" /><Cursor /></> },
  { label: "按面选择图元", d: <><path d="M1 2l4-1.500v7L1 9z" fill={LIGHT} stroke={BLUE} /><Cursor /></> },
  { label: "选择时拖拽图元", d: <><path d="M3 0v6M0 3h6" strokeWidth="1.500" /><Cursor /></> },
  { label: "后台进程", d: <circle cx="5" cy="5" r="3.200" stroke="#999" strokeWidth="1.500" strokeDasharray="2 .6" /> }
];

function StatusBar() {
  return (
    <footer className="flex h-[14px] items-center justify-between bg-[#cbcbcb] pl-px pr-10 text-[7px] leading-[14px]">
      <span>[&lt;草图&gt; : 线] 的延伸</span>
      <div className="flex items-center gap-1">
        {statusTools.map((s) => (
          <button key={s.label} aria-label={s.label}><Svg w={10} box="0 0 10 10">{s.d}</Svg></button>
        ))}
        <button className="flex items-center">
          <Svg w={10} h={9}><path d="M1 1h8L6 5v3.500l-2-1V5z" fill="#d5dde6" /></Svg>
          :0
        </button>
      </div>
    </footer>
  );
}

// tapered callout arrow: a point at `from`, a head at `to`
function Arrow({ from, to, body, head, len }) {
  const dx = to[0] - from[0];
  const dy = to[1] - from[1];
  const l = Math.hypot(dx, dy);
  const [ux, uy] = [dx / l, dy / l];
  const at = (back, side) => `${to[0] - ux * back - uy * side},${to[1] - uy * back + ux * side}`;
  return <polygon points={[at(l, 0.5), at(len, body), at(len + 1, head), at(0, 0), at(len + 1, -head), at(len, -body), at(l, -0.5)].join(" ")} />;
}

function Callouts() {
  return (
    <svg viewBox="0 0 480 270" width="480" height="270" className="pointer-events-none absolute left-0 top-0 z-20" fill="#f04a3e" aria-hidden="true">
      <g fill="none" stroke="#f04a3e" strokeWidth="2">
        <rect x="397" y="29" width="18" height="16" rx="1" />
        <rect x="373" y="52" width="22" height="20" rx="1" />
        <rect x="195" y="95" width="31" height="17" rx="1" />
      </g>
      <Arrow from={[171, 60]} to={[194, 90]} body={2} head={4} len={9} />
      <Arrow from={[383, 4]} to={[398, 29]} body={2} head={4} len={9} />
      <Arrow from={[408, 54]} to={[477, 264]} body={2.2} head={4.5} len={9} />
      <Arrow from={[453, 258]} to={[383, 78]} body={2.8} head={5} len={11} />
    </svg>
  );
}

export default function App() {
  return (
    <div lang="zh-CN" className="relative flex min-h-screen flex-col overflow-hidden bg-[#cbcbcb] font-['Open_Sans','Noto_Sans_CJK_SC',sans-serif] text-[#222]">
      <TitleBar />
      <TabBar />
      <Ribbon />
      <OptionsBar />
      <div className="flex min-h-0 flex-1">
        <Properties />
        <ViewArea />
        <Browser />
      </div>
      <StatusBar />
      <Callouts />
    </div>
  );
}
